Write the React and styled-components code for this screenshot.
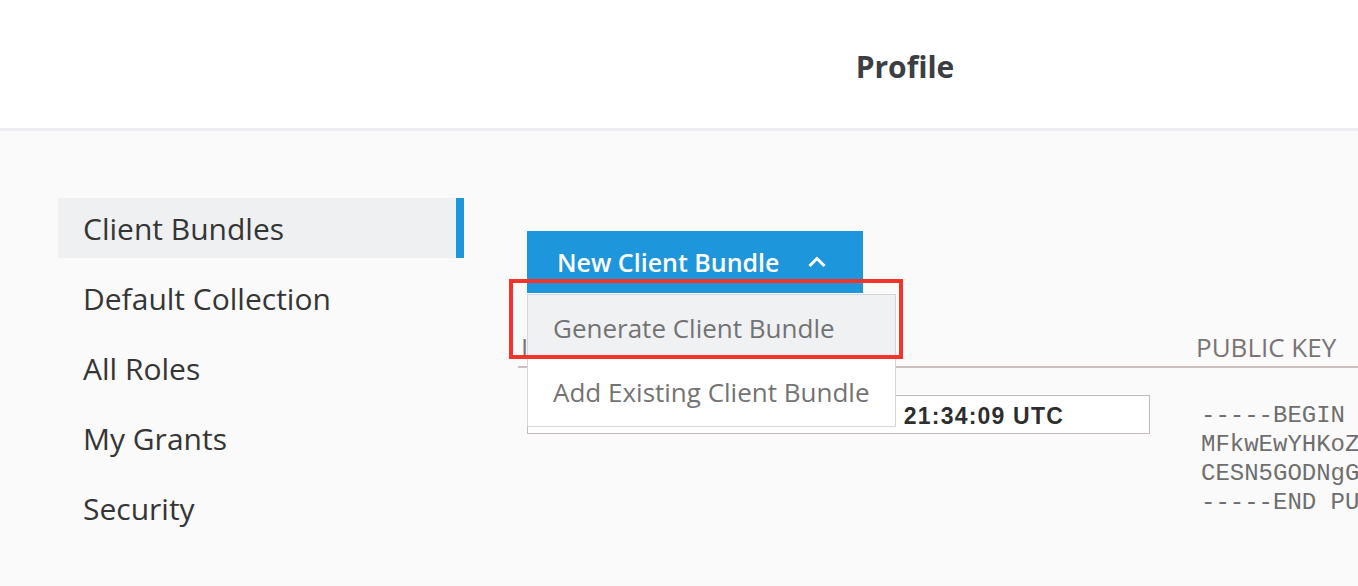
import React from "react";
import styled, { createGlobalStyle } from "styled-components";

const GlobalStyle = createGlobalStyle`
  html, body {
    margin: 0;
    padding: 0;
    background: #fafafa;
    overflow: hidden;
  }
  body {
    font-family: "Open Sans", "Noto Sans", sans-serif;
    color: #333;
  }
  * { box-sizing: border-box; }
`;

const Page = styled.div`
  width: 1358px;
  height: 586px;
  overflow: hidden;
  background: #fafafa;
`;

const Header = styled.header`
  height: 131px;
  background: #fff;
  border-bottom: 3px solid #eceef2;
  display: flex;
  align-items: center;
  justify-content: center;
  padding-left: 452px;
`;

const Title = styled.h1`
  margin: 0;
  font-size: 30px;
  font-weight: 700;
  color: #3b3e43;
  line-height: 1;
  padding-top: 6px;
`;

const Body = styled.div`
  display: flex;
  padding: 67px 0 0 58px;
`;

const Sidebar = styled.nav`
  width: 406px;
  flex: none;
  display: flex;
  flex-direction: column;
  gap: 10px;
`;

const NavItem = styled.div`
  height: 60px;
  display: flex;
  align-items: center;
  padding-left: 25px;
  font-size: 30px;
  color: #353535;
  white-space: nowrap;
  background: ${(p) => (p.$active ? "#eff0f2" : "transparent")};
  border-right: 8px solid ${(p) => (p.$active ? "#1e96dc" : "transparent")};
`;

const Main = styled.main`
  flex: 1;
  min-width: 0;
  padding: 33px 0 0 63px;
`;

const DropdownWrap = styled.div`
  position: relative;
  display: inline-block;
  z-index: 2;
`;

const PrimaryButton = styled.button`
  width: 336px;
  height: 62px;
  border: none;
  background: #1e96dc;
  color: #fff;
  font-family: "Open Sans", sans-serif;
  font-size: 25px;
  font-weight: 600;
  display: flex;
  align-items: center;
  padding: 0 0 0 30px;
  gap: 28px;
  cursor: pointer;
`;

const Menu = styled.div`
  position: absolute;
  top: calc(100% + 1px);
  left: 0;
  width: 369px;
  background: #fff;
  border: 1px solid #d6d6d6;
`;

const MenuItem = styled.div`
  height: ${(p) => (p.$first ? "61px" : "70px")};
  display: flex;
  align-items: center;
  padding: ${(p) => (p.$first ? "4px" : "2px")} 0 0 25px;
  font-size: 26px;
  color: #737373;
  background: ${(p) => (p.$hover ? "#f0f1f3" : "#fff")};
  white-space: nowrap;
`;

const Highlight = styled.div`
  position: absolute;
  left: -18px;
  top: 48px;
  width: 394px;
  height: 80px;
  border: 4px solid #f2342b;
  pointer-events: none;
`;

const Table = styled.div`
  margin: 34px 0 0 -9px;
  width: 1000px;
`;

const HeadRow = styled.div`
  display: grid;
  grid-template-columns: 678px 1fr;
  height: 41px;
  align-items: center;
  border-bottom: 2px solid #cbbfbf;
`;

const HeadCell = styled.div`
  font-size: 26px;
  color: #7a7474;
  padding-left: ${(p) => p.$pad || 0}px;
  white-space: nowrap;
`;

const Row = styled.div`
  display: grid;
  grid-template-columns: 678px 1fr;
  align-items: start;
  padding-top: 27px;
`;

const DateBox = styled.div`
  margin-left: 9px;
  width: 623px;
  height: 39px;
  background: #fff;
  border: 1px solid #c9b9b9;
  display: flex;
  align-items: center;
  justify-content: flex-end;
  padding: 3px 85px 0 0;
  font-family: "Liberation Sans", Arial, sans-serif;
  font-weight: 700;
  font-size: 23px;
  letter-spacing: 1.2px;
  color: #2e2e2e;
  white-space: nowrap;
`;

const KeyText = styled.pre`
  margin: 6px 0 0 5px;
  font-family: "Liberation Mono", "Courier New", monospace;
  font-size: 24px;
  line-height: 29px;
  color: #6e6e6e;
`;

const Chevron = () => (
  <svg width="18" height="12" viewBox="0 0 18 12" fill="none">
    <path d="M1.5 10 L9 2.5 L16.5 10" stroke="#fff" strokeWidth="3" />
  </svg>
);

const navItems = ["Client Bundles", "Default Collection", "All Roles", "My Grants", "Security"];

export default function App() {
  return (
    <Page>
      <GlobalStyle />
      <Header>
        <Title>Profile</Title>
      </Header>
      <Body>
        <Sidebar>
          {navItems.map((n, i) => (
            <NavItem key={n} $active={i === 0}>
              {n}
            </NavItem>
          ))}
        </Sidebar>
        <Main>
          <DropdownWrap>
            <PrimaryButton>
              New Client Bundle
              <Chevron />
            </PrimaryButton>
            <Menu>
              <MenuItem $first $hover>
                Generate Client Bundle
              </MenuItem>
              <MenuItem>Add Existing Client Bundle</MenuItem>
            </Menu>
            <Highlight />
          </DropdownWrap>
          <Table>
            <HeadRow>
              <HeadCell $pad={3}>LABEL</HeadCell>
              <HeadCell>PUBLIC KEY</HeadCell>
            </HeadRow>
            <Row>
              <DateBox>Mar 14 2018 21:34:09 UTC</DateBox>
              <KeyText>
                {"-----BEGIN PUBLIC KEY-----\nMFkwEwYHKoZIzj0CAQYIKoZIzj0DAQcDQgAE\nCESN5GODNgGqW9e1n3kqfL8vR2aH7sYdT0uZ\n-----END PUBLIC KEY-----"}
              </KeyText>
            </Row>
          </Table>
        </Main>
      </Body>
    </Page>
  );
}
